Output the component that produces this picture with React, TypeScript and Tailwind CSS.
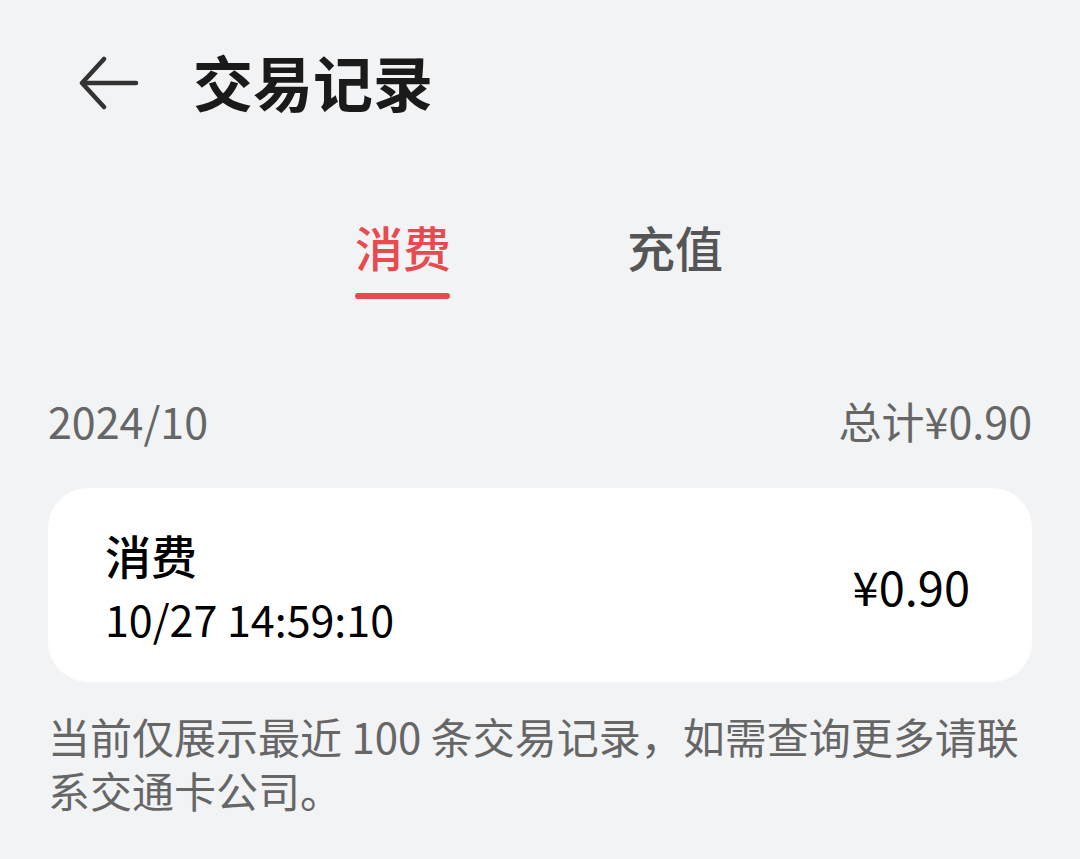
const cjk = { fontFamily: '"Noto Sans CJK SC", sans-serif' };

function BackArrow() {
  return (
    <svg width="60" height="56" viewBox="0 0 60 56" fill="none" stroke="#333" strokeWidth="4.5" strokeLinecap="round" strokeLinejoin="round">
      <path d="M25 4 L3 28 L25 52" />
      <path d="M4 28 H57" />
    </svg>
  );
}

export default function App() {
  return (
    <div className="w-[1080px] h-[859px] bg-[#f1f3f5] overflow-hidden" style={cjk}>
      <div className="flex items-center h-[60px] mt-[53px] pl-[79px]">
        <BackArrow />
        <div className="ml-[54px] -mt-[4px] text-[60px] font-bold text-[#1a1a1a] leading-none">交易记录</div>
      </div>

      <div className="flex justify-center gap-[176px] mt-[109px] pr-[2px]">
        <div className="flex flex-col items-center">
          <div className="text-[48px] font-medium text-[#e84a4f] leading-none">消费</div>
          <div className="mt-[23px] h-[6px] w-[95px] rounded-full bg-[#e84a4f]" />
        </div>
        <div className="text-[48px] font-medium text-[#555] leading-none">充值</div>
      </div>

      <div className="flex justify-between items-center mt-[100px] px-[48px] text-[43px] text-[#666] leading-none">
        <span>2024/10</span>
        <span>总计¥0.90</span>
      </div>

      <div className="mx-[48px] mt-[46px] h-[194px] bg-white rounded-[40px] flex items-center justify-between pl-[57px] pr-[62px]">
        <div className="flex flex-col">
          <span className="text-[46px] font-medium text-black leading-none">消费</span>
          <span className="mt-[20px] text-[43px] text-black leading-none">10/27 14:59:10</span>
        </div>
        <span className="text-[47px] text-black leading-none">¥0.90</span>
      </div>

      <p className="ml-[48px] mr-[40px] mt-[27px] text-[42px] leading-[54px] text-[#666]">
        当前仅展示最近 100 条交易记录，如需查询更多请联<br />系交通卡公司。
      </p>
    </div>
  );
}
